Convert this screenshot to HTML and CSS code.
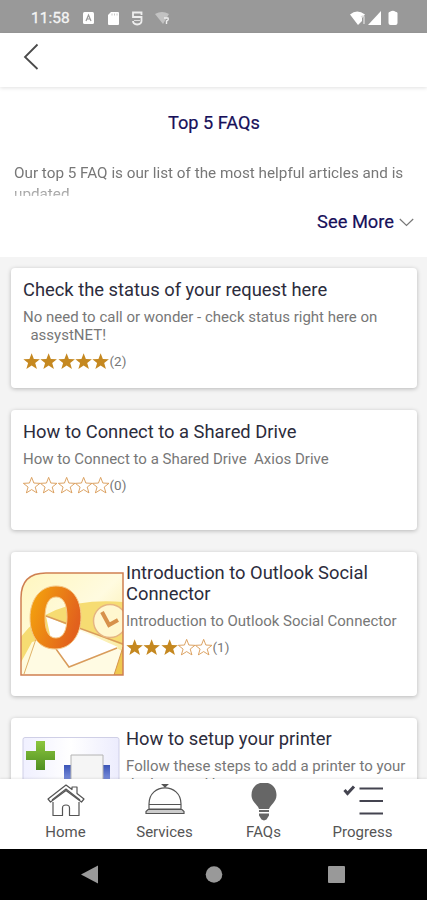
FILE: index.html
```html
<!DOCTYPE html>
<html lang="en">
<head>
    <meta charset="UTF-8">
    <meta name="viewport" content="width=device-width, initial-scale=1.0">
    <title>Top 5 FAQs</title>
    <link rel="stylesheet" href="styles.css">
</head>
<body>
    <!-- Shared star shapes -->
    <svg class="defs" width="0" height="0">
        <symbol id="star" viewBox="0 0 18 17">
            <path d="M9 .3l2.300 5.900 6.300.3-4.900 3.900 1.800 6.100L9 13l-5.500 3.500 1.800-6.100L.4 6.500l6.300-.3z"/>
        </symbol>
    </svg>

    <div class="status-bar">
        <span class="time">11:58</span>
        <svg class="status-left" width="90" height="16" viewBox="0 0 90 16">
            <rect x="1" y="2" width="11" height="12" rx="1.500" fill="#fff"/>
            <path d="M4 11l2.500-6L9 11M5 9h3" fill="none" stroke="#999" stroke-width="1.200"/>
            <path d="M29 2h7q1 0 1 1v11q0 1-1 1h-9q-1 0-1-1V5z" fill="#fff"/>
            <path d="M30 3.500v2M32.500 3.500v2M35 3.500v2" stroke="#bbb" stroke-width=".8"/>
            <path d="M59.500 5V2.500H51V7h8.500v4q0 3-4.300 3.500Q51 14 51 11" fill="none" stroke="#eee" stroke-width="1.800"/>
            <path d="M52 10.500h6" stroke="#ddd" stroke-width="1"/>
            <path d="M73 4q7-4 14 0l-6 10z" fill="#c2c2c2"/>
            <path d="M82 8h4q1 2-1.500 3v3" fill="none" stroke="#eee" stroke-width="1.400"/>
        </svg>
        <svg class="status-right" width="50" height="16" viewBox="0 0 50 16">
            <path d="M1 4.500Q8-1.500 16 4.500L13 8v3l-4 4z" fill="#fff"/>
            <path d="M12 7q3-2 3 0v7" fill="none" stroke="#ddd" stroke-width="1.300"/>
            <path d="M32 1v14H19z" fill="#fff"/>
            <path d="M39.500 3q0-1 1.500-1.300Q44-.3 46.500 1.700 48.500 2 48.500 3v10q0 2-2 2H41.500q-2 0-2-2z" fill="#fff"/>
        </svg>
    </div>

    <header class="top-bar">
        <svg width="16" height="28" viewBox="0 0 16 28"><path d="M14.500 1.500L2 14l12.500 12" fill="none" stroke="#4a4a4a" stroke-width="1.800"/></svg>
    </header>

    <section class="intro">
        <h1>Top 5 FAQs</h1>
        <p class="intro-text">Our top 5 FAQ is our list of the most helpful articles and is updated</p>
        <div class="see-more">See More
            <svg width="15" height="9" viewBox="0 0 15 9"><path d="M.8 1l6.700 6.500L14.200 1" fill="none" stroke="#777" stroke-width="1.200"/></svg>
        </div>
    </section>

    <main class="faq-list">
        <article class="card">
            <div class="card-body">
                <h2>Check the status of your request here</h2>
                <p class="desc">No need to call or wonder - check status right here on <br>&nbsp; assystNET!</p>
                <div class="rating">
                    <svg class="full"><use href="#star"/></svg><svg class="full"><use href="#star"/></svg><svg class="full"><use href="#star"/></svg><svg class="full"><use href="#star"/></svg><svg class="full"><use href="#star"/></svg>
                    <span>(2)</span>
                </div>
            </div>
        </article>

        <article class="card">
            <div class="card-body">
                <h2>How to Connect to a Shared Drive</h2>
                <p class="desc">How to Connect to a Shared Drive&nbsp; Axios Drive</p>
                <div class="rating">
                    <svg><use href="#star"/></svg><svg><use href="#star"/></svg><svg><use href="#star"/></svg><svg><use href="#star"/></svg><svg><use href="#star"/></svg>
                    <span>(0)</span>
                </div>
            </div>
        </article>

        <article class="card card-tall">
            <svg class="thumb" width="104" height="104" viewBox="0 0 104 104">
                <defs>
                    <linearGradient id="paper" x1="0" y1="0" x2="1" y2="1">
                        <stop offset="0" stop-color="#fff6bd"/><stop offset=".5" stop-color="#fffbe0"/><stop offset="1" stop-color="#f7e58c"/>
                    </linearGradient>
                    <linearGradient id="ring" x1="0" y1="0" x2="1" y2=".4">
                        <stop offset="0" stop-color="#f5a80c"/><stop offset="1" stop-color="#e2611d"/>
                    </linearGradient>
                    <clipPath id="frame"><path d="M1 103V26Q1 1 26 1H103V103z"/></clipPath>
                </defs>
                <g clip-path="url(#frame)">
                    <rect width="104" height="104" fill="url(#paper)"/>
                    <path d="M0 66Q30 24 104 30V74L60 56 12 70 0 92z" fill="#f6dc72"/>
                    <path d="M16 66L4 104H94L104 80 60 56z" fill="#fffbe3"/>
                    <path d="M26 44L98 75 49 95 32 72z" fill="#fff"/>
                    <path d="M26 44L103 72M36 77l13 18 48-19" fill="none" stroke="#d99c5c" stroke-width="1.500"/>
                    <path d="M103 75L94 103h10z" fill="#efc84f" stroke="#d5944c"/>
                    <path d="M16 67L4 102" stroke="#dfb168"/>
                    <circle cx="90" cy="49" r="16.500" fill="#fff7cf" stroke="#e6b581" stroke-width="1.500"/>
                    <path d="M82 40l7 13 9-5" fill="none" stroke="#d7914b" stroke-width="4"/>
                </g>
                <path fill-rule="evenodd" d="M36 14C52 14 61 27 61 45S51 77 35 77 10 64 10 46 20 14 36 14zM36 25C28 25 25 34 25 46S28 66 36 66 47 57 47 45 44 25 36 25z" fill="url(#ring)" stroke="#f5c98a" stroke-width="1"/>
                <path d="M1 103V26Q1 1 26 1H103V103z" fill="none" stroke="#cf8052" stroke-width="1.500"/>
            </svg>
            <div class="card-body">
                <h2>Introduction to Outlook Social Connector</h2>
                <p class="desc">Introduction to Outlook Social Connector</p>
                <div class="rating">
                    <svg class="full"><use href="#star"/></svg><svg class="full"><use href="#star"/></svg><svg class="full"><use href="#star"/></svg><svg><use href="#star"/></svg><svg><use href="#star"/></svg>
                    <span>(1)</span>
                </div>
            </div>
        </article>

        <article class="card card-tall">
            <svg class="thumb" width="104" height="104" viewBox="0 0 104 104">
                <defs>
                    <linearGradient id="panel" x1="0" y1="0" x2="1" y2="0">
                        <stop offset="0" stop-color="#f0f0ff"/><stop offset=".5" stop-color="#fff"/><stop offset="1" stop-color="#ececfd"/>
                    </linearGradient>
                    <linearGradient id="plus" x1="0" y1="0" x2="0" y2="1">
                        <stop offset="0" stop-color="#8cc63e"/><stop offset="1" stop-color="#4f8f22"/>
                    </linearGradient>
                    <linearGradient id="blue" x1="0" y1="0" x2="0" y2="1">
                        <stop offset="0" stop-color="#3b55b8"/><stop offset=".4" stop-color="#93a5ea"/>
                    </linearGradient>
                </defs>
                <rect x="3" y="-.5" width="96" height="96" rx="2" fill="url(#panel)" stroke="#cfcfe6"/>
                <path d="M16 3h9v10h10v9H25v10h-9V22H6v-9h10z" fill="url(#plus)"/>
                <path d="M44 27h46v50H44z" fill="url(#blue)"/>
                <path d="M51 17h32v50H51z" fill="#f5f5f5" stroke="#b4b4b4"/>
            </svg>
            <div class="card-body">
                <h2>How to setup your printer</h2>
                <p class="desc">Follow these steps to add a printer to your desktop and laptop</p>
            </div>
        </article>
    </main>

    <nav class="tab-bar">
        <a class="tab">
            <svg width="40" height="36" viewBox="0 0 40 36" fill="none" stroke="#555" stroke-width="1.200" stroke-linejoin="round">
                <path d="M7 19v13.500h9.500V25q0-3 3.500-3t3.500 3v7.500H33V19"/>
                <path d="M2 16L20 2l6 4.500V4h5v6.500l7 5.500-2.500 3L20 7.500 4.500 19z"/>
                <path d="M6 17L20 6l14 11"/>
            </svg>
            Home
        </a>
        <a class="tab">
            <svg width="40" height="36" viewBox="0 0 40 36" fill="none" stroke="#555" stroke-width="1.200">
                <path d="M4 21C4-.5 36-.5 36 21"/>
                <path d="M17.500 1.500h5L20 4z" fill="#555"/>
                <path d="M4 21.500h32v4.500H4z"/>
                <path d="M3 26.500h34l2 2v2H1v-2z" fill="#ccc"/>
            </svg>
            Services
        </a>
        <a class="tab">
            <svg width="40" height="39" viewBox="0 0 40 39" fill="#666">
                <path d="M20-.5c8 0 12.500 5.500 12.500 12.500 0 7-6 9.500-7.500 14H15C13.500 21.500 7.500 19 7.500 12 7.500 5 12-.5 20-.5z"/>
                <path d="M15 27h10v2H15zM15 30.500h10v2l-2.500 4-2.500 1-2.500-1-2.500-4z"/>
            </svg>
            FAQs
        </a>
        <a class="tab">
            <svg width="40" height="36" viewBox="0 0 40 36" fill="none" stroke="#444450">
                <path d="M1.500 7l3 3.500L11 3.500" stroke-width="3"/>
                <path d="M16.500 5.500H40M16.500 18H40M16.500 30.500H40" stroke-width="2.200"/>
            </svg>
            Progress
        </a>
    </nav>

    <div class="system-nav">
        <svg width="427" height="51" viewBox="0 0 427 51" fill="#999">
            <path d="M81 25.500L98 16.500v18z"/>
            <circle cx="214" cy="25.500" r="8.300"/>
            <rect x="328" y="17" width="17" height="17" rx="1"/>
        </svg>
    </div>
</body>
</html>
```
FILE: styles.css
```css
* { box-sizing: border-box; }
body {
    margin: 0;
    width: 427px;
    height: 900px;
    display: flex;
    flex-direction: column;
    overflow: hidden;
    font-family: Roboto, sans-serif;
    background-color: #fff;
}
h1, h2, p { margin: 0; font-weight: 400; }
svg { display: block; flex-shrink: 0; }
.defs { position: absolute; }

/* Status bar */
.status-bar {
    height: 33px;
    flex-shrink: 0;
    display: flex;
    align-items: center;
    padding: 2px 28px 0 31px;
    background-color: #999;
    color: #fff;
}
.time { width: 51px; font-size: 15.5px; color: #f4f4f4; -webkit-text-stroke: 0.3px #f4f4f4; }
.status-right { margin-left: auto; }

.top-bar {
    height: 54px;
    flex-shrink: 0;
    padding: 10px 23px;
    box-shadow: 0 1px 4px rgba(0,0,0,0.12);
}

/* Intro */
.intro { height: 170px; flex-shrink: 0; padding: 25px 13px 0 14px; }
.intro h1 { 
    font-size: 18.2px; 
    line-height: 22px; 
    text-align: center; 
    color: #17105a; 
    -webkit-text-stroke: 0.2px #17105a;
}
.intro-text {
    height: 33px;
    margin-top: 29px;
    overflow: hidden;
    font-size: 15.25px;
    line-height: 21px;
    color: #777;
    -webkit-mask-image: linear-gradient(#000 60%, rgba(0,0,0,0.5));
    mask-image: linear-gradient(#000 60%, rgba(0,0,0,0.5));
}
.see-more {
    display: flex;
    justify-content: flex-end;
    align-items: center;
    gap: 5px;
    margin-top: 15px;
    font-size: 18.3px;
    line-height: 22px;
    color: #17105a;
    -webkit-text-stroke: 0.2px #17105a;
}

/* FAQ cards */
.faq-list {
    flex: 1;
    min-height: 0;
    display: flex;
    flex-direction: column;
    gap: 22px;
    padding: 11px 10px 0 11px;
    overflow: hidden;
    background-color: #f4f4f4;
}
.card {
    height: 120px;
    flex-shrink: 0;
    display: flex;
    padding: 11px 8px 0 12px;
    border-radius: 4px;
    background-color: #fff;
    box-shadow: 0 1px 4px rgba(0,0,0,0.25);
}
.card-tall { height: 143.5px; padding-top: 10px; padding-left: 9px; }
.card-tall .card-body { margin-left: 2px; }
.thumb { margin-top: 10px; overflow: visible; }
.card h2 { font-size: 18.35px; line-height: 21px; color: #2c2c3c; }
.desc { 
    margin-top: 8px; 
    font-size: 15px; 
    line-height: 18px; 
    color: #777; 
}
.rating {
    display: flex;
    align-items: center;
    margin-top: 8px;
    height: 18px;
}
.rating svg {
    width: 17.3px;
    height: 16.5px;
    overflow: visible;
    fill: none;
    stroke: #d6944c;
    stroke-width: 0.9;
}
.rating svg.full { fill: #c58820; stroke: none; }
.rating span { font-size: 13.5px; color: #777; }

/* Bottom tabs */
.tab-bar {
    height: 70px;
    flex-shrink: 0;
    display: flex;
    justify-content: space-between;
    padding: 4px 15px 0 16px;
    background-color: #fff;
    box-shadow: 0 -1px 2px rgba(0,0,0,0.08);
}
.tab {
    width: 99px;
    height: 59px;
    display: flex;
    flex-direction: column;
    align-items: center;
    justify-content: space-between;
    font-size: 15px;
    line-height: 20px;
    color: #555;
}
.system-nav { height: 51px; flex-shrink: 0; background-color: #000; }
```
